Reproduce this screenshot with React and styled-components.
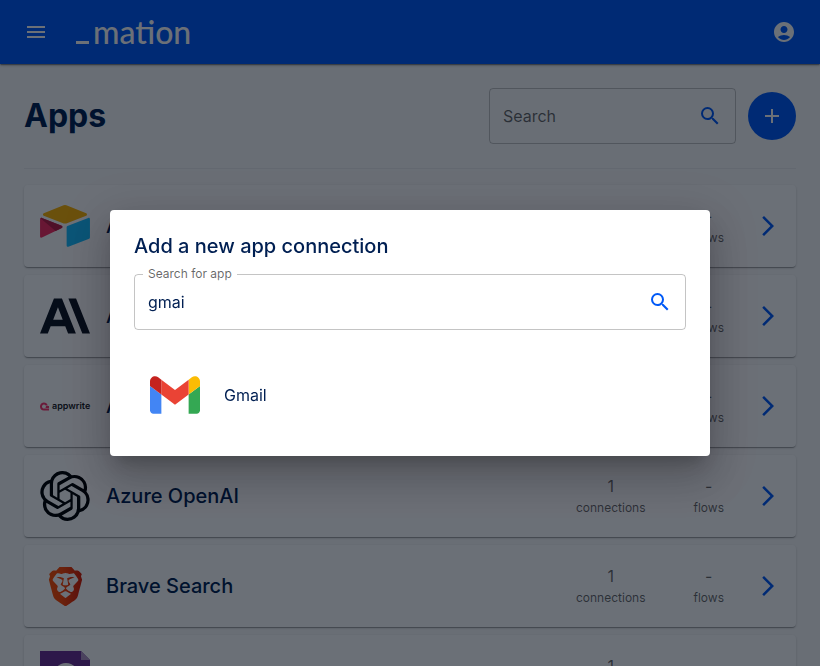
import React, { useState } from "react";
import styled, { createGlobalStyle } from "styled-components";
import {
  MdMenu,
  MdAccountCircle,
  MdSearch,
  MdAdd,
  MdArrowForwardIos,
} from "react-icons/md";
import { SiAnthropic, SiAppwrite, SiOpenai, SiBrave } from "react-icons/si";

const primary = "#0059f7";
const ink = "#001f52";
const muted = "rgba(0, 0, 0, 0.6)";

const GlobalStyle = createGlobalStyle`
  *, *::before, *::after { box-sizing: border-box; }
  body {
    margin: 0;
    overflow: hidden;
    background: #fafafa;
    color: ${ink};
    font-family: Inter, "Noto Sans", sans-serif;
    font-size: 16px;
    line-height: 24px;
  }
  button, input { font: inherit; color: inherit; }
  svg { display: block; }
`;

const AppBar = styled.header`
  display: flex;
  align-items: center;
  height: 64px;
  padding: 0 24px;
  background: ${primary};
  color: #fff;
  box-shadow: 0 2px 1px -1px rgba(0, 0, 0, 0.2), 0 1px 1px rgba(0, 0, 0, 0.14),
    0 1px 3px rgba(0, 0, 0, 0.3);
`;

const IconButton = styled.button`
  display: inline-flex;
  padding: 0;
  border: 0;
  background: none;
  color: ${(p) => p.$color || "inherit"};
  cursor: pointer;
`;

const Brand = styled.a`
  display: flex;
  align-items: baseline;
  gap: 4px;
  margin: 0 auto 0 28px;
  color: inherit;
  text-decoration: none;
  font: 500 32px/32px Lato, sans-serif;
  &::before {
    content: "";
    width: 13px;
    height: 3px;
    background: currentColor;
  }
`;

const Page = styled.main`
  padding: 24px;
`;

const PageHeader = styled.div`
  display: flex;
  align-items: center;
  gap: 12px;
  padding-bottom: 24px;
  border-bottom: 1px solid rgba(0, 8, 20, 0.05);
`;

const PageTitle = styled.h1`
  flex: 1;
  margin: 0;
  font-size: 32px;
  line-height: 40px;
  font-weight: 700;
`;

const Field = styled.div`
  position: relative;
  display: flex;
  align-items: center;
  flex: 0 1 ${(p) => p.$basis || "auto"};
  min-width: 0;
  height: 56px;
  padding: 0 13px;
  border: 1px solid rgba(0, 0, 0, 0.23);
  border-radius: 4px;
`;

const FieldInput = styled.input`
  flex: 1;
  min-width: 0;
  padding: 0;
  border: 0;
  outline: 0;
  background: none;
  &::placeholder { color: ${muted}; opacity: 1; }
`;

const FieldLabel = styled.label`
  position: absolute;
  top: -9px;
  left: 8px;
  padding: 0 5px;
  background: #fff;
  color: ${muted};
  font-size: 12px;
  line-height: 16px;
`;

const AddButton = styled.button`
  display: grid;
  place-items: center;
  width: 48px;
  height: 48px;
  padding: 0;
  border: 0;
  border-radius: 50%;
  background: ${primary};
  color: #fff;
  cursor: pointer;
`;

const AppList = styled.div`
  display: grid;
  gap: 8px;
  padding-top: 16px;
`;

const AppCard = styled.a`
  display: flex;
  align-items: center;
  height: 82px;
  padding: 16px;
  border-radius: 4px;
  background: #fff;
  color: inherit;
  text-decoration: none;
  box-shadow: 0 2px 1px -1px rgba(0, 0, 0, 0.2), 0 1px 1px rgba(0, 0, 0, 0.14),
    0 1px 3px rgba(0, 0, 0, 0.12);
`;

const LogoBox = styled.span`
  display: grid;
  place-items: center;
  width: 50px;
  height: 50px;
  color: #0d1420;
`;

const BraveMark = styled(SiBrave)`
  fill: url(#brave-fill);
`;

const AppwriteLogo = styled.span`
  display: flex;
  align-items: center;
  gap: 3px;
  color: #19191d;
  font-size: 9px;
  line-height: 12px;
  font-weight: 600;
`;

const AppName = styled.h2`
  flex: 1;
  margin: 0 0 0 16px;
  font-size: 20px;
  line-height: 32px;
  font-weight: 500;
`;

const Stat = styled.span`
  display: flex;
  flex-direction: column;
  align-items: center;
  margin-right: ${(p) => p.$after};
  color: ${muted};
`;

const StatLabel = styled.span`
  font-size: 12px;
  line-height: 20px;
`;

const Chevron = styled(MdArrowForwardIos)`
  color: ${primary};
`;

const Backdrop = styled.div`
  position: fixed;
  inset: 0;
  display: grid;
  place-items: center;
  padding: 32px;
  background: rgba(0, 8, 20, 0.58);
`;

const Dialog = styled.section`
  width: 100%;
  max-width: 600px;
  padding: 20px 24px 24px;
  border-radius: 4px;
  background: #fff;
  box-shadow: 0 11px 15px -7px rgba(0, 0, 0, 0.2),
    0 24px 38px 3px rgba(0, 0, 0, 0.14), 0 9px 46px 8px rgba(0, 0, 0, 0.12);
`;

const DialogTitle = styled.h2`
  margin: 0 0 12px;
  font-size: 20px;
  line-height: 32px;
  font-weight: 500;
`;

const Results = styled.ul`
  margin: 16px 0 0;
  padding: 0;
  list-style: none;
`;

const ResultButton = styled.button`
  display: flex;
  align-items: center;
  gap: 24px;
  width: 100%;
  min-height: 86px;
  padding: 12px 16px 0;
  border: 0;
  background: none;
  text-align: left;
  cursor: pointer;
`;

const AirtableLogo = () => (
  <svg width="50" height="42" viewBox="11 10 177 149">
    <path fill="#fcb400" d="M90.04 12.37 24.08 39.66c-3.67 1.52-3.63 6.73.06 8.19l66.24 26.27a24.6 24.6 0 0 0 18.12 0l66.23-26.27c3.69-1.46 3.73-6.67.06-8.19l-65.96-27.29a24.6 24.6 0 0 0-18.79 0" />
    <path fill="#18bfff" d="M105.31 88.46v65.62c0 3.12 3.15 5.26 6.05 4.1l73.81-28.64a4.4 4.4 0 0 0 2.79-4.11V59.81c0-3.12-3.15-5.25-6.05-4.1l-73.81 28.64a4.4 4.4 0 0 0-2.79 4.11" />
    <path fill="#f82b60" d="m88.08 91.85-21.91 10.57-2.22 1.08-46.24 22.15c-2.93 1.41-6.67-.72-6.67-3.98V60.09c0-1.18.61-2.2 1.42-2.96.34-.34.72-.62 1.12-.84 1.1-.67 2.68-.84 4.02-.31l70.11 27.78c3.56 1.41 3.84 6.41.37 8.09" />
    <path fill="#ba1e45" d="m88.08 91.85-21.91 10.57-53.71-45.29c.34-.34.72-.62 1.12-.84 1.1-.67 2.68-.84 4.02-.31l70.11 27.78c3.56 1.41 3.84 6.41.37 8.09" />
  </svg>
);

const BraveGradient = () => (
  <svg width="0" height="0" aria-hidden="true">
    <defs>
      <linearGradient id="brave-fill" x1="0" x2="1" y1="0" y2="0">
        <stop offset="0" stopColor="#ff5000" />
        <stop offset="0.4" stopColor="#ff4500" />
        <stop offset="1" stopColor="#d81a00" />
      </linearGradient>
    </defs>
  </svg>
);

const DocumentLogo = () => (
  <svg width="50" height="50" viewBox="0 0 50 50">
    <path fill="#6c2f94" d="M0 0h41l9 9v41H0z" />
    <path fill="#b493c4" d="M41 0l9 9h-9z" />
    <circle cx="26" cy="25" r="11" fill="none" stroke="#fff" strokeWidth="4" />
  </svg>
);

const GmailLogo = () => (
  <svg width="50" height="38" viewBox="52 42 88 66">
    <path fill="#4285f4" d="M58 108h14V74L52 59v43c0 3.32 2.69 6 6 6" />
    <path fill="#34a853" d="M120 108h14c3.32 0 6-2.69 6-6V59l-20 15" />
    <path fill="#fbbc04" d="M120 48v26l20-15v-8c0-7.42-8.47-11.65-14.4-7.2" />
    <path fill="#ea4335" d="M72 74V48l24 18 24-18v26L96 92" />
    <path fill="#c5221f" d="M52 51v8l20 15V48l-5.6-4.2c-5.94-4.45-14.4-.22-14.4 7.2" />
  </svg>
);

const apps = [
  { name: "Airtable", logo: <AirtableLogo /> },
  { name: "Anthropic", logo: <SiAnthropic size={50} /> },
  {
    name: "Appwrite",
    logo: (
      <AppwriteLogo>
        <SiAppwrite size={9} color="#fd366e" />
        appwrite
      </AppwriteLogo>
    ),
  },
  { name: "Azure OpenAI", logo: <SiOpenai size={50} color="#000" /> },
  { name: "Brave Search", logo: <BraveMark size={39} /> },
  { name: "Documents", logo: <DocumentLogo /> },
];

export default function App() {
  const [query, setQuery] = useState("gmai");

  return (
    <>
      <GlobalStyle />
      <BraveGradient />
      <AppBar>
        <IconButton aria-label="Open menu">
          <MdMenu size={24} />
        </IconButton>
        <Brand href="#home">mation</Brand>
        <IconButton aria-label="Account">
          <MdAccountCircle size={24} />
        </IconButton>
      </AppBar>
      <Page>
        <PageHeader>
          <PageTitle>Apps</PageTitle>
          <Field $basis="32%">
            <FieldInput placeholder="Search" aria-label="Search" />
            <IconButton $color={primary} aria-label="Search apps">
              <MdSearch size={24} />
            </IconButton>
          </Field>
          <AddButton aria-label="Add connection">
            <MdAdd size={24} />
          </AddButton>
        </PageHeader>
        <AppList>
          {apps.map((app) => (
            <AppCard key={app.name} href="#app">
              <LogoBox>{app.logo}</LogoBox>
              <AppName>{app.name}</AppName>
              <Stat $after="48px">
                1<StatLabel>connections</StatLabel>
              </Stat>
              <Stat $after="32px">
                -<StatLabel>flows</StatLabel>
              </Stat>
              <Chevron size={24} />
            </AppCard>
          ))}
        </AppList>
      </Page>
      <Backdrop>
        <Dialog role="dialog" aria-modal="true" aria-labelledby="dialog-title">
          <DialogTitle id="dialog-title">Add a new app connection</DialogTitle>
          <Field>
            <FieldLabel htmlFor="app-query">Search for app</FieldLabel>
            <FieldInput
              id="app-query"
              value={query}
              onChange={(e) => setQuery(e.target.value)}
            />
            <IconButton $color={primary} aria-label="Search for app">
              <MdSearch size={24} />
            </IconButton>
          </Field>
          <Results>
            <li>
              <ResultButton>
                <GmailLogo />
                Gmail
              </ResultButton>
            </li>
          </Results>
        </Dialog>
      </Backdrop>
    </>
  );
}
